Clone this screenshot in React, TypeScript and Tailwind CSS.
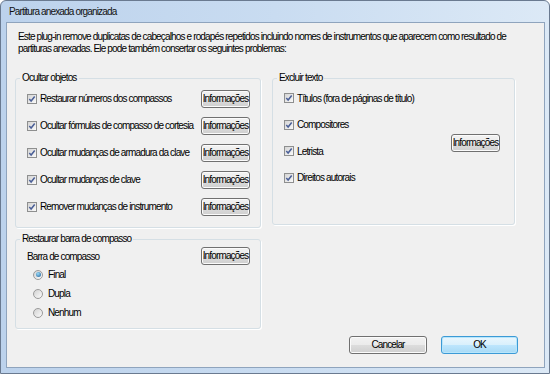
import type { ReactNode } from 'react';
import clsx from 'clsx';

const FONT = "font-['Liberation_Sans',Arial,sans-serif] text-[10px] tracking-[-0.85px]";

const CheckBox = () => (
  <span className="flex h-[10px] w-[10px] shrink-0 items-center justify-center border border-[#8e8f8f] bg-linear-to-br from-[#d4d4d4] to-[#fafafa]">
    <svg viewBox="0 0 8 8" className="h-[8px] w-[8px]">
      <path d="M1.3 4.1 L3.1 6 L6.7 1.5" fill="none" stroke="#4a5f97" strokeWidth="1.5" />
    </svg>
  </span>
);

const Radio = ({ checked }: { checked?: boolean }) => (
  <span className="flex h-[10px] w-[10px] shrink-0 items-center justify-center rounded-full border border-[#9a9a9a] bg-linear-to-br from-[#d2d2d2] to-[#fbfbfb]">
    {checked && (
      <span className="h-[5px] w-[5px] rounded-full bg-[radial-gradient(circle_at_40%_35%,#9bdcf9,#1a5b96)]" />
    )}
  </span>
);

interface WinButtonProps {
  children: ReactNode;
  primary?: boolean;
  className?: string;
}

const WinButton = ({ children, primary, className }: WinButtonProps) => (
  <button
    className={clsx(
      'flex h-[18px] shrink-0 items-center justify-center rounded-[3px] border leading-none text-black',
      primary
        ? 'border-[#3c9ad6] bg-[linear-gradient(#eaf6fd_0%,#d9f0fc_50%,#bee6fd_50%,#a7d9f5_100%)] shadow-[inset_0_0_0_1px_#b8e6fb]'
        : 'border-[#707070] bg-[linear-gradient(#f2f2f2_0%,#ebebeb_50%,#dddddd_50%,#cfcfcf_100%)] shadow-[inset_0_0_0_1px_#fbfbfb]',
      className
    )}
  >
    {children}
  </button>
);

const InfoButton = ({ className }: { className?: string }) => (
  <WinButton className={clsx('w-[49px]', className)}>Informações</WinButton>
);

const hideItems = [
  'Restaurar números dos compassos',
  'Ocultar fórmulas de compasso de cortesia',
  'Ocultar mudanças de armadura da clave',
  'Ocultar mudanças de clave',
  'Remover mudanças de instrumento',
];

const textItems = ['Títulos (fora de páginas de título)', 'Compositores', 'Letrista', 'Direitos autorais'];

const barlines = ['Final', 'Dupla', 'Nenhum'];

const groupClass = 'rounded-[3px] border border-[#d5dfe5] shadow-[1px_1px_0_#ffffff]';

export default function App() {
  return (
    <div className={clsx(FONT, 'h-[374px] w-[550px] bg-white text-black')}>
      <div className="flex h-[374px] w-[550px] flex-col rounded-t-[6px] border border-[#6a7a90] bg-linear-to-r from-[#bcd2ec] via-[#c9dcf1] to-[#dce9f6] pl-[5px] pr-[4px] pb-[5px]">
        {/* title bar */}
        <div className="flex h-[21px] items-center pl-[3px] text-[#111]">
          Partitura anexada organizada
        </div>

        {/* client area */}
        <div className="flex-1 border border-[#8fa4bd] bg-[#f0f0f0]">
          <p className="pl-[11px] pt-[8px] leading-[12px] whitespace-nowrap">
            Este plug-in remove duplicatas de cabeçalhos e rodapés repetidos incluindo nomes de instrumentos que aparecem como resultado de
            <br />
            partituras anexadas. Ele pode também consertar os seguintes problemas:
          </p>

          <div className="mt-[17px] flex items-start gap-[11px] pl-[8px]">
            <div className="flex w-[246px] flex-col gap-[5px]">
              {/* Ocultar objetos */}
              <fieldset className={clsx(groupClass, 'pb-[7px]')}>
                <legend className="ml-[4px] px-[2px] leading-[12px]">Ocultar objetos</legend>
                <div className="pt-[1px]">
                  {hideItems.map((label) => (
                    <div key={label} className="flex h-[27px] items-center pl-[11px] pr-[10px]">
                      <CheckBox />
                      <span className="ml-[3px] flex-1 whitespace-nowrap">{label}</span>
                      <InfoButton />
                    </div>
                  ))}
                </div>
              </fieldset>

              {/* Restaurar barra de compasso */}
              <fieldset className={clsx(groupClass, 'pb-[6px]')}>
                <legend className="ml-[4px] px-[2px] leading-[12px]">Restaurar barra de compasso</legend>
                <div className="mt-[2px] flex h-[18px] items-center pl-[11px] pr-[10px]">
                  <span className="flex-1">Barra de compasso</span>
                  <InfoButton />
                </div>
                <div className="flex flex-col pl-[17px]">
                  {barlines.map((b, i) => (
                    <div key={b} className="flex h-[19px] items-center gap-[5px]">
                      <Radio checked={i === 0} />
                      <span>{b}</span>
                    </div>
                  ))}
                </div>
              </fieldset>
            </div>

            {/* Excluir texto */}
            <fieldset className={clsx(groupClass, 'w-[243px] pb-[33px]')}>
              <legend className="ml-[4px] px-[2px] leading-[12px]">Excluir texto</legend>
              <div className="flex items-start pl-[11px] pr-[14px] pt-[1px]">
                <div className="flex flex-1 flex-col">
                  {textItems.map((label) => (
                    <div key={label} className="flex h-[26.5px] items-center">
                      <CheckBox />
                      <span className="ml-[3px] whitespace-nowrap">{label}</span>
                    </div>
                  ))}
                </div>
                <InfoButton className="mt-[49px]" />
              </div>
            </fieldset>
          </div>

          <div className="mt-[7px] flex justify-end gap-[14px] pr-[26px]">
            <WinButton className="w-[78px]">Cancelar</WinButton>
            <WinButton primary className="w-[77px]">
              OK
            </WinButton>
          </div>
        </div>
      </div>
    </div>
  );
}
